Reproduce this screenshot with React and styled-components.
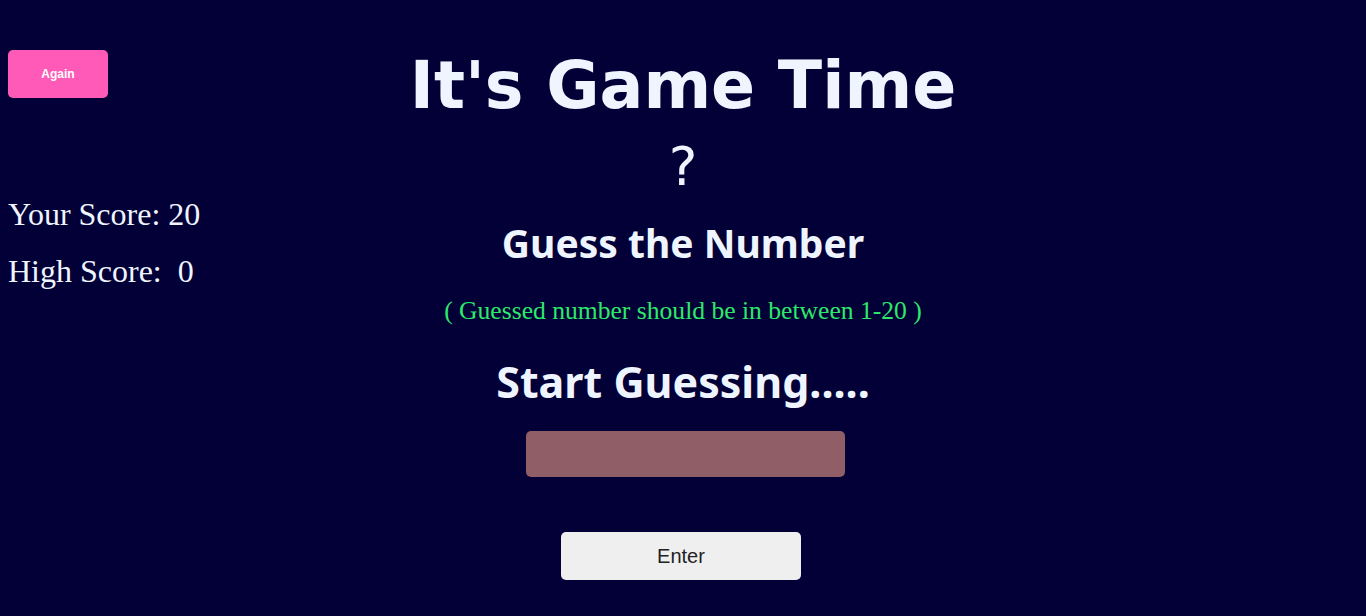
import React, { useState } from 'react';
import styled, { createGlobalStyle } from 'styled-components';

const GlobalStyle = createGlobalStyle`
	html, body {
		background: #020036;
	}
	body {
		margin: 8px;
		font-family: "Liberation Serif", serif;
		color: #eef5ff;
	}
`;

const Page = styled.div`
	display: grid;
	grid-template-columns: 1fr auto 1fr;
	align-items: start;
`;

const Side = styled.aside`
	display: flex;
	flex-direction: column;
	align-items: flex-start;
	padding-top: 42px;
`;

const AgainButton = styled.button`
	width: 100px;
	height: 48px;
	border: none;
	border-radius: 5px;
	background: #ff5ab8;
	color: #ffffff;
	font-family: "Liberation Sans", Arial, sans-serif;
	font-size: 12px;
	font-weight: 700;
	cursor: pointer;
`;

const ScoreLine = styled.p`
	margin: ${(props) => props.$top}px 0 0;
	font-size: 32px;
	line-height: 36px;
	white-space: pre;
	color: #eef5ff;
`;

const Main = styled.main`
	display: flex;
	flex-direction: column;
	align-items: center;
	padding-top: 40px;
`;

const Title = styled.h1`
	margin: 0;
	font-family: "DejaVu Sans", Verdana, sans-serif;
	font-size: 65px;
	font-weight: 700;
	line-height: 76px;
	color: #eef5ff;
`;

const Mystery = styled.div`
	margin-top: 12px;
	font-family: "DejaVu Sans", Verdana, sans-serif;
	font-size: 54px;
	line-height: 62px;
	color: #eef5ff;
`;

const Heading = styled.h2`
	margin: ${(props) => props.$top}px 0 0;
	font-family: "Comic Sans MS", "Noto Sans", sans-serif;
	font-size: ${(props) => props.$size}px;
	font-weight: 700;
	line-height: 1.2;
	color: #eef5ff;
`;

const Hint = styled.p`
	margin: 29px 0 0;
	font-size: 25.6px;
	line-height: 30px;
	color: #2ee86b;
`;

const GuessInput = styled.input`
	margin: 24px 0 0 6px;
	width: 319px;
	height: 46px;
	box-sizing: border-box;
	border: none;
	border-radius: 5px;
	background: #8f5e66;
	color: #ffffff;
	font-size: 20px;
	text-align: center;
	outline: none;
`;

const EnterButton = styled.button`
	margin: 55px 4px 0 0;
	width: 240px;
	height: 48px;
	border: none;
	border-radius: 5px;
	background: #efefef;
	color: #222222;
	font-family: "Liberation Sans", Arial, sans-serif;
	font-size: 20px;
	cursor: pointer;
`;

const App = () => {
	const [score] = useState(20);
	const [highScore] = useState(0);
	const [guess, setGuess] = useState('');

	return (
		<>
			<GlobalStyle />
			<Page>
				<Side>
					<AgainButton>Again</AgainButton>
					<ScoreLine $top={98}>Your Score: {score}</ScoreLine>
					<ScoreLine $top={21}>High Score:  {highScore}</ScoreLine>
				</Side>
				<Main>
					<Title>It's Game Time</Title>
					<Mystery>?</Mystery>
					<Heading $top={22} $size={39}>Guess the Number</Heading>
					<Hint>( Guessed number should be in between 1-20 )</Hint>
					<Heading $top={30} $size={43}>Start Guessing.....</Heading>
					<GuessInput
						type="number"
						value={guess}
						onChange={(e) => setGuess(e.target.value)}
					/>
					<EnterButton>Enter</EnterButton>
				</Main>
				<div />
			</Page>
		</>
	);
};

export default App;
